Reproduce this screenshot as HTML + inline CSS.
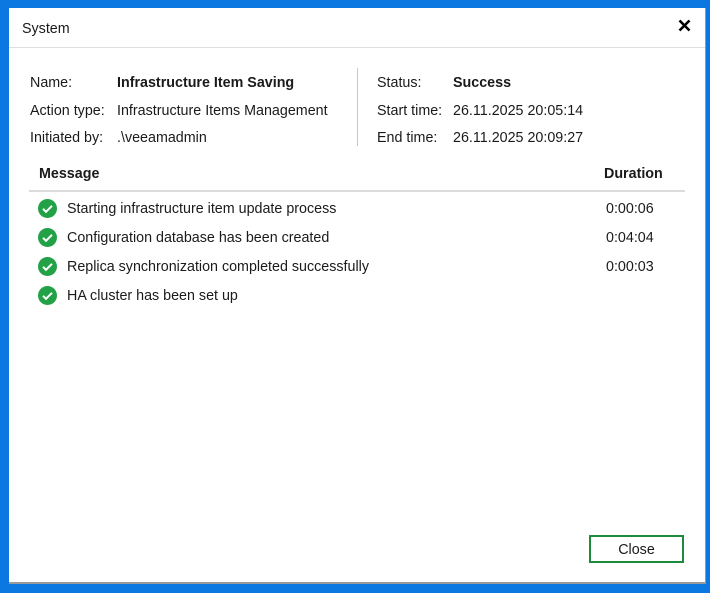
<!DOCTYPE html>
<html><head><meta charset="utf-8"><style>
*{margin:0;padding:0;box-sizing:border-box}
body{width:710px;height:593px;background:#0a78e0;position:relative;overflow:hidden;font-family:"Liberation Sans",sans-serif;font-size:14.3px;color:#1a1a1a}
.dlg{position:absolute;left:9px;top:8px;width:697px;height:576px;background:#fff;border-right:1px solid #999;border-bottom:2px solid #999}
.t{position:absolute;white-space:nowrap;margin-top:1px}
.b{font-weight:bold}
.sep{position:absolute;left:0;top:39px;width:696px;height:1px;background:#dedede}
.vl{position:absolute;left:348px;top:60px;width:1px;height:78px;background:#c8c8c8}
.hl{position:absolute;left:20px;top:182px;width:656px;height:2px;background:#dcdcdc}
.ic{position:absolute;left:29px;width:19px;height:19px}
.btn{position:absolute;left:580px;top:527px;width:95px;height:28px;border:2px solid #1e8a3c;text-align:center;line-height:26px}
</style></head><body>
<div class="dlg">
<div class="t" style="left:13px;top:12px">System</div>
<svg style="position:absolute;left:669px;top:11px" width="13" height="13" viewBox="0 0 13 13"><path d="M1.5 1.5L11.5 11.5M11.5 1.5L1.5 11.5" stroke="#000" stroke-width="2.6"/></svg>
<div class="sep"></div>
<div class="t" style="left:21px;top:66px">Name:</div>
<div class="t b" style="left:108px;top:66px">Infrastructure Item Saving</div>
<div class="t" style="left:21px;top:94px">Action type:</div>
<div class="t" style="left:108px;top:94px">Infrastructure Items Management</div>
<div class="t" style="left:21px;top:121px">Initiated by:</div>
<div class="t" style="left:108px;top:121px">.\veeamadmin</div>
<div class="vl"></div>
<div class="t" style="left:368px;top:66px">Status:</div>
<div class="t b" style="left:444px;top:66px">Success</div>
<div class="t" style="left:368px;top:94px">Start time:</div>
<div class="t" style="left:444px;top:94px">26.11.2025 20:05:14</div>
<div class="t" style="left:368px;top:121px">End time:</div>
<div class="t" style="left:444px;top:121px">26.11.2025 20:09:27</div>
<div class="t b" style="left:30px;top:157px">Message</div>
<div class="t b" style="left:595px;top:157px">Duration</div>
<div class="hl"></div>
<svg class="ic" style="top:191px" viewBox="0 0 19 19"><circle cx="9.5" cy="9.5" r="9.5" fill="#23a147"/><path d="M5 9.8l3 3 6-6" stroke="#fff" stroke-width="2" fill="none"/></svg>
<div class="t" style="left:58px;top:192px">Starting infrastructure item update process</div>
<div class="t" style="left:597px;top:192px">0:00:06</div>
<svg class="ic" style="top:220px" viewBox="0 0 19 19"><circle cx="9.5" cy="9.5" r="9.5" fill="#23a147"/><path d="M5 9.8l3 3 6-6" stroke="#fff" stroke-width="2" fill="none"/></svg>
<div class="t" style="left:58px;top:221px">Configuration database has been created</div>
<div class="t" style="left:597px;top:221px">0:04:04</div>
<svg class="ic" style="top:249px" viewBox="0 0 19 19"><circle cx="9.5" cy="9.5" r="9.5" fill="#23a147"/><path d="M5 9.8l3 3 6-6" stroke="#fff" stroke-width="2" fill="none"/></svg>
<div class="t" style="left:58px;top:250px">Replica synchronization completed successfully</div>
<div class="t" style="left:597px;top:250px">0:00:03</div>
<svg class="ic" style="top:278px" viewBox="0 0 19 19"><circle cx="9.5" cy="9.5" r="9.5" fill="#23a147"/><path d="M5 9.8l3 3 6-6" stroke="#fff" stroke-width="2" fill="none"/></svg>
<div class="t" style="left:58px;top:279px">HA cluster has been set up</div>
<div class="btn">Close</div>
</div>
</body></html>
